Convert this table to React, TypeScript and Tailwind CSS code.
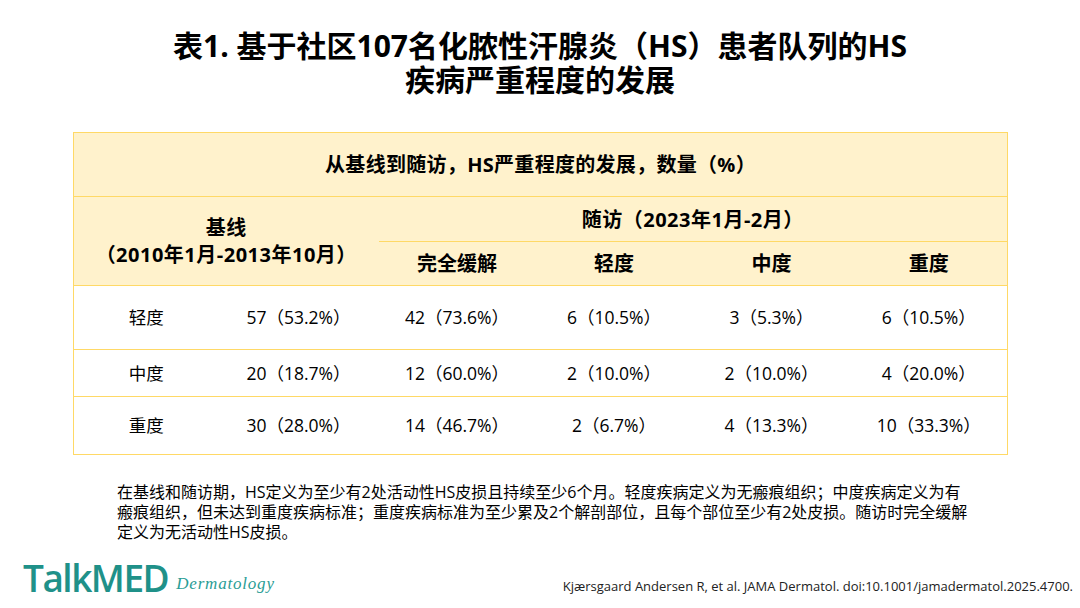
const font = "font-['Open_Sans','Noto_Sans_CJK_SC',sans-serif]";

const rows = [
  ["轻度", "57（53.2%）", "42（73.6%）", "6（10.5%）", "3（5.3%）", "6（10.5%）"],
  ["中度", "20（18.7%）", "12（60.0%）", "2（10.0%）", "2（10.0%）", "4（20.0%）"],
  ["重度", "30（28.0%）", "14（46.7%）", "2（6.7%）", "4（13.3%）", "10（33.3%）"],
];
const rowHeights = ["h-[64px]", "h-[47px]", "h-[58px]"];

export default function App() {
  return (
    <div className={`flex h-[608px] w-[1080px] flex-col bg-white text-black ${font}`}>
      {/* Title */}
      <h1 className="pt-[29px] text-center text-[30px] font-bold leading-[34px]">
        表1. 基于社区107名化脓性汗腺炎（HS）患者队列的HS
        <br />
        疾病严重程度的发展
      </h1>

      {/* Table */}
      <div className="ml-[73px] mt-[35px] w-[934px]">
        <table className="w-full table-fixed border-collapse border-[1.5px] border-[#ffd966]">
          <colgroup>
            <col className="w-[145px]" />
            <col className="w-[160px]" />
            <col className="w-[157px]" />
            <col className="w-[157px]" />
            <col className="w-[158px]" />
            <col className="w-[157px]" />
          </colgroup>
          <thead className="bg-[#fff2cc] text-[20px] font-bold">
            <tr className="h-[64px] border-b-[1.5px] border-[#ffd966]">
              <th colSpan={6} className="p-0 text-center tracking-[0.3px]">
                从基线到随访，HS严重程度的发展，数量（%）
              </th>
            </tr>
            <tr className="h-[45px] border-b-[1.5px] border-[#ffd966]">
              <th rowSpan={2} colSpan={2} className="p-0 text-center leading-[27px] tracking-[0.5px]">
                基线
                <br />
                （2010年1月-2013年10月）
              </th>
              <th colSpan={4} className="p-0 pt-[2px] text-center tracking-[0.5px]">
                随访（2023年1月-2月）
              </th>
            </tr>
            <tr className="h-[44px] border-b-[1.5px] border-[#ffd966]">
              <th className="p-0 text-center">完全缓解</th>
              <th className="p-0 text-center">轻度</th>
              <th className="p-0 text-center">中度</th>
              <th className="p-0 text-center">重度</th>
            </tr>
          </thead>
          <tbody className="text-[17.5px]">
            {rows.map((r, i) => (
              <tr key={i} className={`${rowHeights[i]} border-b-[1.5px] border-[#ffd966]`}>
                {r.map((c, j) => (
                  <td key={j} className="p-0 text-center">
                    {c}
                  </td>
                ))}
              </tr>
            ))}
          </tbody>
        </table>
      </div>

      {/* Footnote */}
      <div className="ml-[117px] mt-[27px] text-[16px] leading-[20px]">
        <p>在基线和随访期，HS定义为至少有2处活动性HS皮损且持续至少6个月。轻度疾病定义为无瘢痕组织；中度疾病定义为有</p>
        <p>瘢痕组织，但未达到重度疾病标准；重度疾病标准为至少累及2个解剖部位，且每个部位至少有2处皮损。随访时完全缓解</p>
        <p>定义为无活动性HS皮损。</p>
      </div>

      {/* Footer */}
      <div className="mt-auto flex items-end justify-between pb-[8px] pl-[23px] pr-[7px]">
        <div className="flex items-end gap-[8px]">
          <span className="text-[37px] font-semibold leading-[44px] tracking-[-1.5px] text-[#1f9189]">
            TalkMED
          </span>
          <span className="pb-[6px] font-['Liberation_Serif',serif] text-[17px] italic leading-[20px] tracking-[0.8px] text-[#2a9d95]">
            Dermatology
          </span>
        </div>
        <span className="pb-[6px] text-[13px] leading-[16px] text-[#222]">
          Kjærsgaard Andersen R, et al. JAMA Dermatol. doi:10.1001/jamadermatol.2025.4700.
        </span>
      </div>
    </div>
  );
}
